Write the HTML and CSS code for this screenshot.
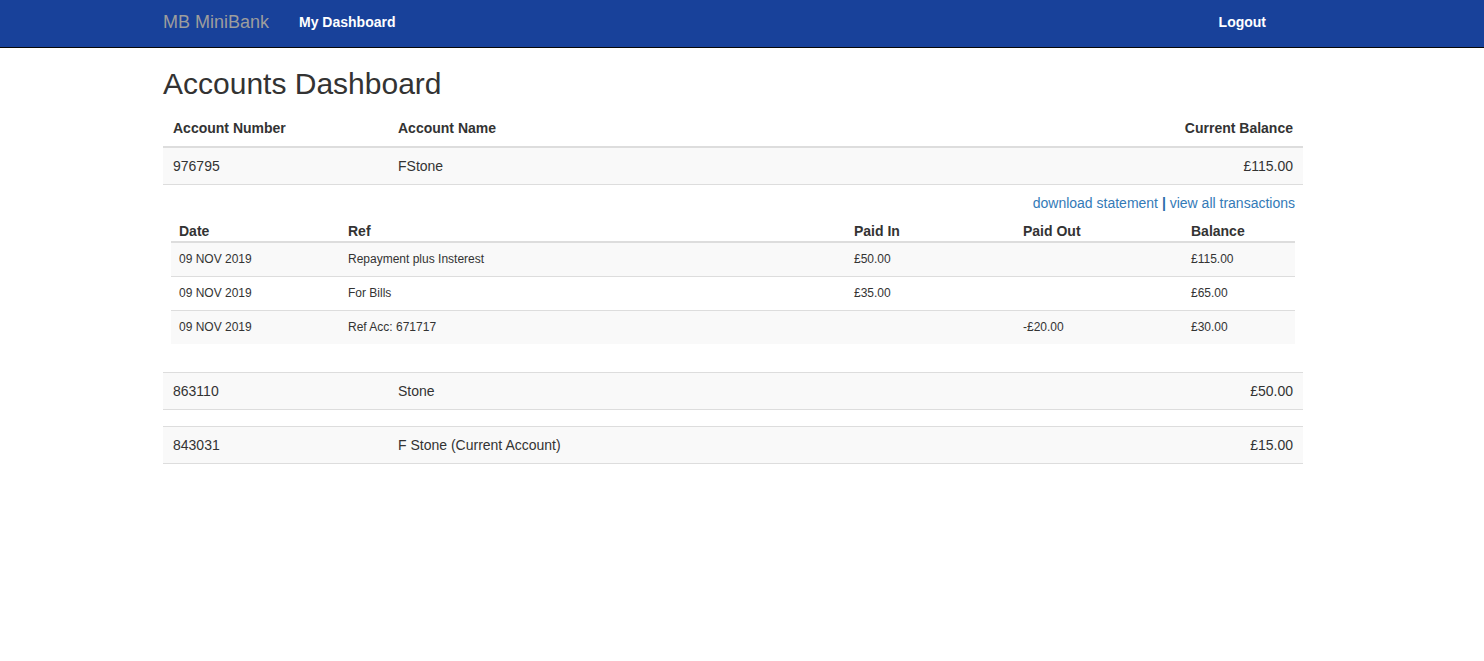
FILE: index.html
```html
<!DOCTYPE html>
<html lang="en">
<head>
<meta charset="utf-8">
<title>MB MiniBank - Accounts Dashboard</title>
<link rel="stylesheet" href="styles.css">
</head>
<body>
<nav class="navbar">
  <div class="nav-inner">
    <a class="brand" href="#">MB MiniBank</a>
    <a class="nav-link" href="#">My Dashboard</a>
    <a class="nav-link nav-right" href="#">Logout</a>
  </div>
</nav>
<main class="container">
  <h1 class="title">Accounts Dashboard</h1>
  <table class="accounts">
    <colgroup>
      <col class="c-num">
      <col class="c-name">
      <col class="c-bal">
    </colgroup>
    <thead>
      <tr>
        <th>Account Number</th>
        <th>Account Name</th>
        <th class="right">Current Balance</th>
      </tr>
    </thead>
    <tbody>
      <tr>
        <td>976795</td>
        <td>FStone</td>
        <td class="right">£115.00</td>
      </tr>
      <tr class="detail">
        <td colspan="3">
          <div class="links"><a href="#">download statement</a> <span class="sep">|</span> <a href="#">view all transactions</a></div>
          <table class="tx">
            <colgroup>
              <col class="t-date">
              <col class="t-ref">
              <col class="t-in">
              <col class="t-out">
              <col class="t-bal">
            </colgroup>
            <thead>
              <tr>
                <th>Date</th>
                <th>Ref</th>
                <th>Paid In</th>
                <th>Paid Out</th>
                <th>Balance</th>
              </tr>
            </thead>
            <tbody>
              <tr>
                <td>09 NOV 2019</td>
                <td>Repayment plus Insterest</td>
                <td>£50.00</td>
                <td></td>
                <td>£115.00</td>
              </tr>
              <tr>
                <td>09 NOV 2019</td>
                <td>For Bills</td>
                <td>£35.00</td>
                <td></td>
                <td>£65.00</td>
              </tr>
              <tr>
                <td>09 NOV 2019</td>
                <td>Ref Acc: 671717</td>
                <td></td>
                <td>-£20.00</td>
                <td>£30.00</td>
              </tr>
            </tbody>
          </table>
        </td>
      </tr>
      <tr>
        <td>863110</td>
        <td>Stone</td>
        <td class="right">£50.00</td>
      </tr>
      <tr class="detail empty">
        <td colspan="3"></td>
      </tr>
      <tr>
        <td>843031</td>
        <td>F Stone (Current Account)</td>
        <td class="right">£15.00</td>
      </tr>
      <tr class="detail empty">
        <td colspan="3"></td>
      </tr>
    </tbody>
  </table>
</main>
</body>
</html>
```

FILE: styles.css
```css
* {
  box-sizing: border-box;
}

html, body {
  margin: 0;
  padding: 0;
  background: #fff;
}

body {
  font-family: "Liberation Sans", Arial, Helvetica, sans-serif;
  font-size: 14px;
  line-height: 20px;
  color: #333;
}

a {
  text-decoration: none;
}

.navbar {
  height: 48px;
  background: #18419a;
  border-bottom: 1px solid #080808;
}

.nav-inner {
  width: 1140px;
  margin-left: 163px;
  display: flex;
  align-items: flex-start;
  height: 47px;
}

.brand {
  font-size: 18px;
  line-height: 20px;
  padding-top: 12px;
  color: #9d9d9d;
}

.nav-link {
  font-size: 14px;
  font-weight: bold;
  line-height: 20px;
  padding-top: 12px;
  color: #fff;
  margin-left: 30px;
}

.nav-right {
  margin-left: auto;
  margin-right: 37px;
}

.container {
  width: 1140px;
  margin-left: 163px;
}

.title {
  font-size: 30px;
  font-weight: normal;
  line-height: 33px;
  margin: 19px 0 10px;
  color: #333;
}

table {
  border-collapse: collapse;
  border-spacing: 0;
}

.accounts {
  width: 100%;
  table-layout: fixed;
  margin-bottom: 20px;
}

.c-num {
  width: 225px;
}

.c-bal {
  width: 300px;
}

.accounts > thead > tr > th {
  text-align: left;
  font-weight: bold;
  padding: 8px 10px;
  border-bottom: 2px solid #ddd;
  vertical-align: bottom;
}

.accounts > tbody > tr > td {
  padding: 8px 10px;
  border-top: 1px solid #ddd;
  vertical-align: top;
}

.accounts > thead > tr:first-child > th {
  border-top: 0;
}

.accounts > tbody > tr:first-child > td {
  border-top: 0;
}

.accounts > tbody > tr:nth-child(odd) > td {
  background: #f9f9f9;
}

.accounts .right {
  text-align: right;
}

.accounts > tbody > tr.detail > td {
  padding: 8px;
  background: #fff;
}

.links {
  text-align: right;
}

.links a {
  color: #337ab7;
}

.links .sep {
  color: #2a6aa8;
  font-weight: bold;
}

.tx {
  width: 100%;
  table-layout: fixed;
  margin-bottom: 20px;
}

.t-date { width: 169px; }
.t-ref { width: 506px; }
.t-in { width: 169px; }
.t-out { width: 168px; }
.t-bal { width: 112px; }

.tx th {
  text-align: left;
  font-weight: bold;
  font-size: 14px;
  line-height: 20px;
  padding: 8px 8px 0;
  border-bottom: 2px solid #ddd;
  vertical-align: bottom;
}

.tx td {
  font-size: 12px;
  line-height: 17px;
  padding: 8px;
  border-top: 1px solid #ddd;
  vertical-align: top;
}

.tx tbody tr:first-child td {
  border-top: 0;
}

.tx tbody tr:nth-child(odd) td {
  background: #f9f9f9;
}
```
